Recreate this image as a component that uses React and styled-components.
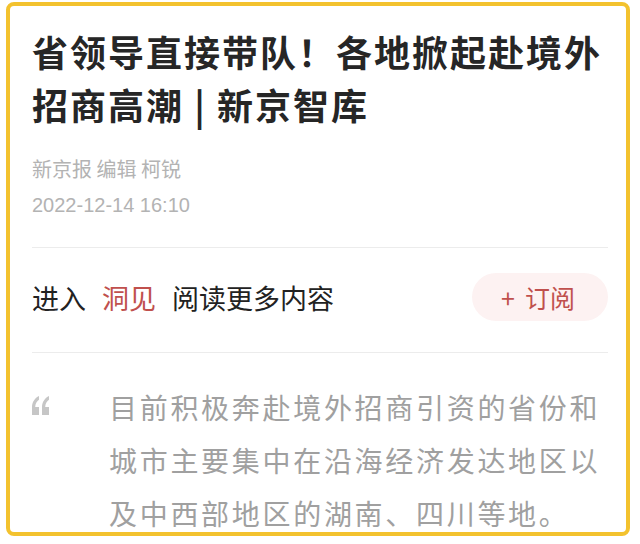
import React from 'react';
import styled, { createGlobalStyle } from 'styled-components';

const GlobalStyle = createGlobalStyle`
  html, body {
    margin: 0;
    padding: 0;
    background: #ffffff;
  }
  body {
    font-family: "Noto Sans CJK SC", "Noto Sans", sans-serif;
  }
`;

const Frame = styled.div`
  margin: 2px 10px 0 6px;
  height: 534px;
  box-sizing: border-box;
  border: 4px solid #f3c22e;
  border-radius: 8px;
  padding: 19px 18px 0 22px;
  background: #fff;
`;

const Title = styled.h1`
  margin: 0;
  font-size: 36px;
  line-height: 53px;
  font-weight: 700;
  color: #262626;
  letter-spacing: 2px;
`;

const Meta = styled.div`
  margin-top: ${(p) => p.top || 0}px;
  font-size: 20px;
  line-height: 36px;
  color: #b3b3b3;
  font-family: ${(p) => (p.num ? '"Liberation Sans", "Noto Sans CJK SC", sans-serif' : 'inherit')};
`;

const Divider = styled.div`
  height: 1px;
  background: #ececec;
  margin-top: ${(p) => p.top || 0}px;
`;

const SubscribeRow = styled.div`
  display: flex;
  align-items: center;
  justify-content: space-between;
  box-sizing: border-box;
  height: 104px;
  padding-bottom: 6px;
`;

const Enter = styled.div`
  display: flex;
  gap: 16px;
  font-size: 27px;
  color: #222;
`;

const Highlight = styled.span`
  color: #c0504d;
`;

const SubscribeButton = styled.button`
  width: 136px;
  height: 48px;
  border: none;
  border-radius: 24px;
  background: #fdf2f2;
  color: #c0504d;
  font-family: inherit;
  font-size: 25px;
  display: flex;
  align-items: center;
  justify-content: center;
  gap: 10px;
  padding: 0 4px 0 0;
`;

const Quote = styled.div`
  display: grid;
  grid-template-columns: 77px 1fr;
  padding-top: 28px;
`;

const QuoteMark = styled.svg`
  width: 17px;
  height: 19px;
  margin-top: 15px;
  fill: #c6c6c6;
`;

const QuoteText = styled.p`
  margin: 0;
  font-size: 28px;
  line-height: 53px;
  letter-spacing: 2.7px;
  color: #a0a0a0;
`;

export default function App() {
  return (
    <>
      <GlobalStyle />
      <Frame>
        <Title>省领导直接带队！各地掀起赴境外招商高潮 | 新京智库</Title>
        <Meta top={20}>新京报 编辑 柯锐</Meta>
        <Meta num>2022-12-14 16:10</Meta>
        <Divider top={24} />
        <SubscribeRow>
          <Enter>
            <span>进入</span>
            <Highlight>洞见</Highlight>
            <span>阅读更多内容</span>
          </Enter>
          <SubscribeButton>
            <span>+</span>
            <span>订阅</span>
          </SubscribeButton>
        </SubscribeRow>
        <Divider />
        <Quote>
          <QuoteMark viewBox="0 0 17 19">
            <path d="M7 0 C3 2 0 6 0 11 L0 19 L7 19 L7 11 L3.2 11 C3.4 7.5 5 5 7 3.8 Z" />
            <path d="M17 0 C13 2 10 6 10 11 L10 19 L17 19 L17 11 L13.2 11 C13.4 7.5 15 5 17 3.8 Z" />
          </QuoteMark>
          <QuoteText>目前积极奔赴境外招商引资的省份和城市主要集中在沿海经济发达地区以及中西部地区的湖南、四川等地。</QuoteText>
        </Quote>
      </Frame>
    </>
  );
}
